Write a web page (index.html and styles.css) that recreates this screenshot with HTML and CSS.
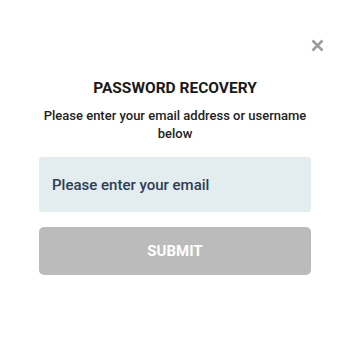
FILE: index.html
```html
<!DOCTYPE html>
<html lang="en">
<head>
    <meta charset="UTF-8">
    <meta name="viewport" content="width=device-width, initial-scale=1.0">
    <title>Password Recovery</title>
    <link rel="stylesheet" href="styles.css">
</head>
<body>
    <div class="modal">
        <div class="modal-top">
            <svg class="close-btn" width="13" height="13" viewBox="0 0 13 13">
                <path d="M1.5 1.5 L11.5 11.5 M11.5 1.5 L1.5 11.5" stroke="#9c9c9c" stroke-width="2.6" stroke-linecap="butt"/>
            </svg>
        </div>
        <h1 class="title">PASSWORD RECOVERY</h1>
        <p class="subtitle">Please enter your email address or username below</p>
        <form class="recovery-form">
            <input type="text" class="email-input" placeholder="Please enter your email">
            <button type="submit" class="submit-btn">SUBMIT</button>
        </form>
    </div>
</body>
</html>
```

FILE: styles.css
```css
body {
    margin: 0;
    padding: 0;
    background-color: #ffffff;
    font-family: Roboto, sans-serif;
}
.modal {
    width: 350px;
    height: 350px;
    padding: 0 39px;
    box-sizing: border-box;
}
.modal-top {
    display: flex;
    justify-content: flex-end;
    padding-top: 39px;
    margin-right: -13px;
}
.close-btn {
    display: block;
    cursor: pointer;
}
.title {
    margin: 26px 0 0 0;
    text-align: center;
    font-size: 15.5px;
    font-weight: 700;
    color: #1a1a1a;
    line-height: 20px;
}
.subtitle {
    margin: 9px 0 0 0;
    text-align: center;
    font-size: 13px;
    font-weight: 500;
    line-height: 18px;
    color: #222222;
}
.recovery-form {
    display: flex;
    flex-direction: column;
    gap: 15px;
    margin-top: 14px;
}
.email-input {
    height: 55px;
    border: none;
    border-radius: 3px;
    background-color: #e3ecee;
    padding: 0 13px;
    font-family: Roboto, sans-serif;
    font-size: 15px;
    font-weight: 500;
    box-sizing: border-box;
    outline: none;
}
.email-input::placeholder {
    color: #2c3e55;
    opacity: 1;
}
.submit-btn {
    height: 48px;
    border: none;
    border-radius: 5px;
    background-color: #bbbbbb;
    color: #ffffff;
    font-family: Roboto, sans-serif;
    font-size: 15px;
    font-weight: 700;
    cursor: pointer;
}
```
